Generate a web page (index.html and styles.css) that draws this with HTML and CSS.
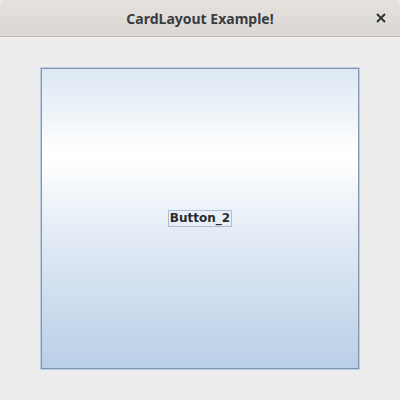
FILE: index.html
```html
<!DOCTYPE html>
<html>
<head>
<meta charset="utf-8">
<link rel="stylesheet" href="styles.css">
</head>
<body>
<div class="window">
  <div class="titlebar">
    <span class="title">CardLayout Example!</span>
    <span class="close">
      <svg width="10" height="10" viewBox="0 0 10 10"><path d="M1 1L9 9M9 1L1 9" stroke="#2e3436" stroke-width="2"/></svg>
    </span>
  </div>
  <div class="content">
    <div class="card">
      <div class="card-inner">
        <span class="label">Button_2</span>
      </div>
    </div>
  </div>
</div>
</body>
</html>
```
FILE: styles.css
```css
html, body {
  margin: 0;
  padding: 0;
  background: #ededed;
}
.window {
  width: 400px;
  height: 400px;
  display: flex;
  flex-direction: column;
}
.titlebar {
  height: 36px;
  border-bottom: 1px solid #c0bbb4;
  background: linear-gradient(#e4e1de, #dbd8d4);
  border-radius: 6px 6px 0 0;
  position: relative;
  display: flex;
  align-items: center;
  justify-content: center;
  flex-shrink: 0;
}
.title {
  font-family: "Noto Sans", "DejaVu Sans", sans-serif;
  font-weight: bold;
  font-size: 14px;
  color: #383c3e;
}
.close {
  position: absolute;
  right: 14px;
  top: 13px;
  width: 10px;
  height: 10px;
  display: flex;
}
.content {
  padding: 30px 40px 0 40px;
}
.card {
  width: 320px;
  height: 303px;
  box-sizing: border-box;
  border: 1px solid #b9cde3;
}
.card-inner {
  height: 100%;
  box-sizing: border-box;
  border: 1px solid #7f95b0;
  background: linear-gradient(#dce7f3 0%, #ffffff 28%, #ffffff 30%, #e3ebf5 55%, #b9cfe7 100%);
  display: flex;
  align-items: center;
  justify-content: center;
}
.label {
  font-family: "DejaVu Sans", sans-serif;
  font-weight: bold;
  font-size: 12px;
  color: #2a2a2a;
  border: 1px solid #a9c0da;
  padding: 0 1px;
  line-height: 15px;
}
```
